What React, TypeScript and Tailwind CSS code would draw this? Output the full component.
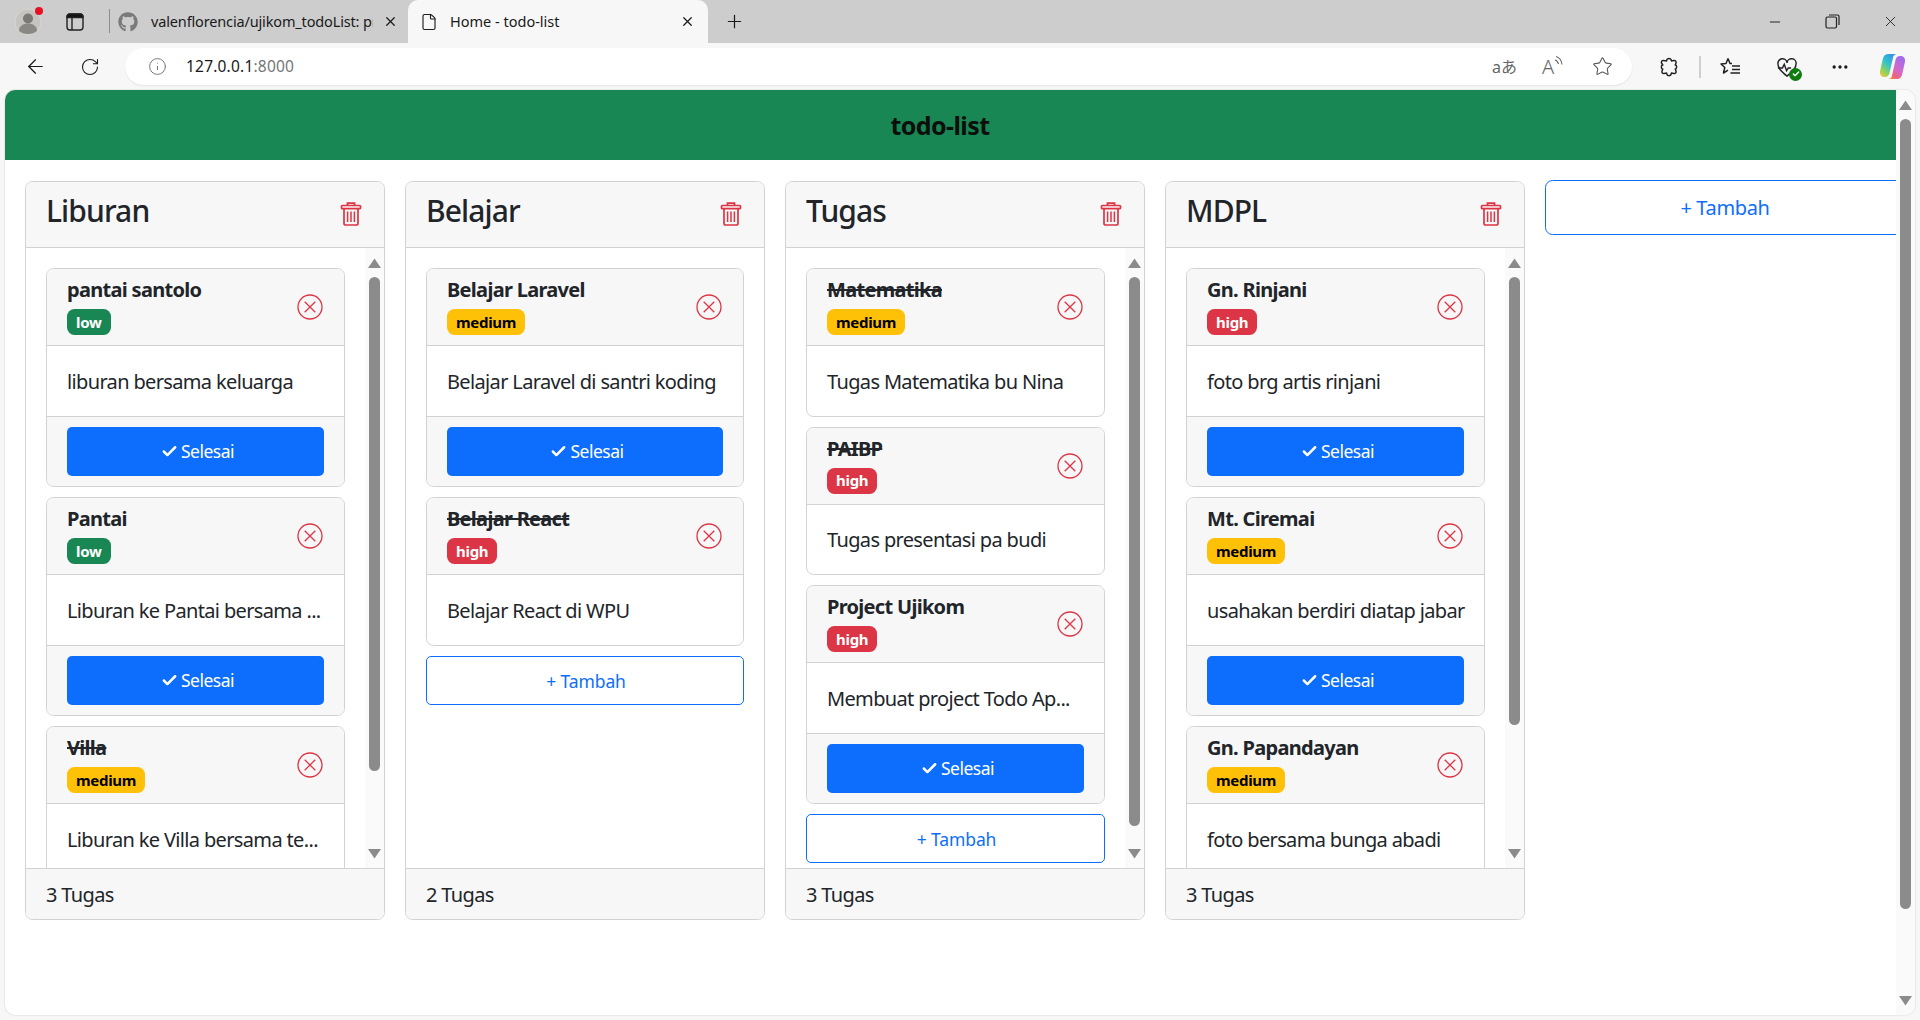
import { ArrowLeft, Check, File, Info, Minus, MoreHorizontal, Plus, RotateCw, Star, X } from "lucide-react";
import { FaGithub } from "react-icons/fa";

type Level = "low" | "medium" | "high";
type Task = { title: string; level: Level; text: string; done?: boolean };
type Board = { name: string; count: string; tasks: Task[]; thumb?: string; add?: boolean };

const boards: Board[] = [
  {
    name: "Liburan",
    count: "3 Tugas",
    thumb: "h-[494px]",
    tasks: [
      { title: "pantai santolo", level: "low", text: "liburan bersama keluarga" },
      { title: "Pantai", level: "low", text: "Liburan ke Pantai bersama ..." },
      { title: "Villa", level: "medium", text: "Liburan ke Villa bersama te...", done: true },
    ],
  },
  {
    name: "Belajar",
    count: "2 Tugas",
    add: true,
    tasks: [
      { title: "Belajar Laravel", level: "medium", text: "Belajar Laravel di santri koding" },
      { title: "Belajar React", level: "high", text: "Belajar React di WPU", done: true },
    ],
  },
  {
    name: "Tugas",
    count: "3 Tugas",
    thumb: "h-[549px]",
    add: true,
    tasks: [
      { title: "Matematika", level: "medium", text: "Tugas Matematika bu Nina", done: true },
      { title: "PAIBP", level: "high", text: "Tugas presentasi pa budi", done: true },
      { title: "Project Ujikom", level: "high", text: "Membuat project Todo Ap..." },
    ],
  },
  {
    name: "MDPL",
    count: "3 Tugas",
    thumb: "h-[448px]",
    tasks: [
      { title: "Gn. Rinjani", level: "high", text: "foto brg artis rinjani" },
      { title: "Mt. Ciremai", level: "medium", text: "usahakan berdiri diatap jabar" },
      { title: "Gn. Papandayan", level: "medium", text: "foto bersama bunga abadi" },
    ],
  },
];

const badgeClass: Record<Level, string> = {
  low: "bg-[#198754] text-white",
  medium: "bg-[#ffc107] text-black",
  high: "bg-[#dc3545] text-white",
};

function TrashIcon() {
  return (
    <svg width="22" height="24" viewBox="0 0 22 24" fill="none" stroke="#dc3545" strokeWidth="1.7" className="mb-[2px]">
      <rect x="1.5" y="3.5" width="19" height="3.2" rx="0.8" />
      <path d="M7.500 3V1.200h7V3" strokeWidth="1.8" />
      <path d="M4 7v14.200c0 1 .8 1.800 1.800 1.800h10.400c1 0 1.800-.8 1.800-1.800V7" />
      <path d="M7.600 9.500v10.500M11 9.500v10.500M14.400 9.500v10.500" strokeWidth="1.500" />
    </svg>
  );
}

function CloseCircle() {
  return (
    <svg width="26" height="26" viewBox="0 0 26 26" fill="none" stroke="#dc3545" strokeWidth="1.3" className="shrink-0">
      <circle cx="13" cy="13" r="12" />
      <path d="M7.700 7.700l10.600 10.600M18.300 7.700L7.700 18.300" />
    </svg>
  );
}

function Scrollbar({ thumb }: { thumb: string }) {
  return (
    <div className="flex flex-col items-center bg-[#fafafa] shrink-0 w-[19px] pt-[10px] pb-[9px]">
      <svg width="13" height="10" viewBox="0 0 13 10" className="shrink-0"><path d="M6.500 0.500L13 10H0z" fill="#8b8b8b" /></svg>
      <div className={`w-[11px] mt-[9px] rounded-full bg-[#8b8b8b] shrink-0 ${thumb}`} />
      <div className="flex-1" />
      <svg width="13" height="10" viewBox="0 0 13 10" className="shrink-0"><path d="M6.500 9.500L13 0H0z" fill="#8b8b8b" /></svg>
    </div>
  );
}

function TaskCard({ task }: { task: Task }) {
  return (
    <div className="border border-[#d2d2d2] rounded-[7.5px] overflow-hidden shrink-0">
      <div className="h-[77px] bg-[#f7f7f7] border-b border-[#d2d2d2] pl-5 pr-[21px] flex items-center justify-between">
        <div className="self-start pt-[9px]">
          <div className={`text-[20px] leading-[24px] mb-[7px] font-bold tracking-[-0.7px] text-[#212529] ${task.done ? "line-through" : ""}`}>{task.title}</div>
          <span className={`flex w-fit items-center h-[26px] px-[9px] rounded-[7.5px] text-[15px] font-bold tracking-[-0.3px] ${badgeClass[task.level]}`}>{task.level}</span>
        </div>
        <CloseCircle />
      </div>
      <div className={`${task.done ? "h-[69.5px]" : "h-[70px]"} px-5 pt-[2px] flex items-center text-[20px] tracking-[-0.65px] text-[#212529] whitespace-nowrap`}>{task.text}</div>
      {!task.done && (
        <div className="h-[70px] bg-[#f7f7f7] border-t border-[#d2d2d2] px-5 flex items-center">
          <button className="w-full h-[49px] pl-[4px] bg-[#0d6efd] text-white rounded-[5px] flex items-center justify-center gap-[3px] text-[17.5px] tracking-[-0.5px]">
            <Check size={17} strokeWidth={3.5} />
            Selesai
          </button>
        </div>
      )}
    </div>
  );
}

function Column({ board }: { board: Board }) {
  return (
    <div className="w-[360px] h-[739px] shrink-0 border border-[#d2d2d2] rounded-[7.5px] flex flex-col overflow-hidden">
      <div className="h-[66px] shrink-0 bg-[#f7f7f7] border-b border-[#d2d2d2] pl-5 pr-[22px] flex items-center justify-between">
        <h4 className="text-[30px] font-medium pb-[9px] tracking-[-0.9px] text-[#212529]">{board.name}</h4>
        <TrashIcon />
      </div>
      <div className="flex-1 flex min-h-0">
        <div className={`flex-1 min-w-0 flex flex-col gap-[10px] pt-5 pl-5 overflow-hidden ${board.thumb ? "pr-0" : "pr-5"}`}>
          {board.tasks.map((t) => (
            <TaskCard key={t.title} task={t} />
          ))}
          {board.add && (
            <button className="h-[49px] shrink-0 pt-[2px] pl-[2px] border border-[#0d6efd] rounded-[5px] text-[#0d6efd] text-[17.5px] tracking-[-0.1px]">+ Tambah</button>
          )}
        </div>
        {board.thumb && <div className="w-[20px] shrink-0 bg-white" />}
        {board.thumb && <Scrollbar thumb={board.thumb} />}
      </div>
      <div className="h-[51px] shrink-0 pt-[2px] bg-[#f7f7f7] border-t border-[#d2d2d2] px-5 flex items-center text-[20px] tracking-[-0.65px] text-[#212529]">{board.count}</div>
    </div>
  );
}

function BrowserChrome() {
  return (
    <>
      <div className="h-[43px] bg-[#cdcdcd] flex items-end text-[#1a1a1a] text-[14.5px] shrink-0">
        <div className="relative w-[56px] h-full flex items-center justify-center">
          <svg width="28" height="28" viewBox="0 0 28 28">
            <circle cx="14" cy="14" r="13" fill="#c6c4c1" stroke="#d8d6d3" />
            <circle cx="14" cy="10.500" r="5" fill="#7b7976" />
            <path d="M5 23c0-5 4-7.500 9-7.500s9 2.500 9 7.500c-2 2-5.500 3-9 3s-7-1-9-3z" fill="#8a8885" />
          </svg>
          <span className="absolute top-[7px] right-[13px] w-[8px] h-[8px] rounded-full bg-[#e81123]" />
        </div>
        <div className="w-[38px] h-full flex items-center justify-center">
          <svg width="18" height="18" viewBox="0 0 18 18" fill="none" stroke="#222" strokeWidth="1.400">
            <rect x="1" y="1" width="16" height="16" rx="3" />
            <path d="M1 4.500a3 3 0 0 1 3-3.500h10a3 3 0 0 1 3 3.500z" fill="#111" />
            <path d="M6 5v12" />
          </svg>
        </div>
        <div className="w-[1px] h-[24px] bg-[#8d8d8d] ml-[15px] mb-[10px]" />
        <div className="w-[298px] h-full flex items-center pl-[8px] pr-[12px] gap-[13px]">
          <FaGithub size={20} className="text-[#7a7a7a] shrink-0" />
          <span className="w-[222px] shrink-0 overflow-hidden whitespace-nowrap tracking-[-0.15px]">valenflorencia/ujikom_todoList: pr</span>
          <X size={15} className="shrink-0 -ml-[3px]" />
        </div>
        <div className="w-[300px] h-[43px] bg-[#f7f7f7] rounded-t-[10px] flex items-center pl-[12px] pr-[13px] gap-[12px]">
          <File size={18} strokeWidth={1.500} />
          <span className="flex-1">Home - todo-list</span>
          <X size={15} />
        </div>
        <div className="w-[52px] h-full flex items-center justify-center"><Plus size={21} strokeWidth={1.400} /></div>
        <div className="flex-1" />
        <div className="h-full flex items-center gap-[42px] pr-[21px]">
          <Minus size={16} strokeWidth={1.400} />
          <svg width="15" height="15" viewBox="0 0 15 15" fill="none" stroke="#222" strokeWidth="1.200"><rect x="1" y="3" width="10.500" height="11" rx="1.500" /><path d="M4 1h8.500A1.500 1.500 0 0 1 14 2.500V11" /></svg>
          <X size={17} strokeWidth={1.200} />
        </div>
      </div>
      <div className="h-[47px] bg-[#f7f7f7] flex items-center shrink-0 text-[#1a1a1a]">
        <div className="w-[125px] flex items-center pl-[24px] gap-[33px]">
          <ArrowLeft size={23} strokeWidth={1.300} />
          <RotateCw size={20} strokeWidth={1.300} />
        </div>
        <div className="w-[1507px] h-[37px] rounded-full bg-white flex items-center pl-[23px] pr-[19px] text-[15.5px] tracking-[0.2px] shadow-[0_1px_2px_rgba(0,0,0,0.08)]">
          <Info size={19} strokeWidth={1.100} className="text-[#666] mr-[19px]" />
          <span>127.0.0.1</span>
          <span className="text-[#767676]">:8000</span>
          <div className="flex-1" />
          <span className="text-[#666] text-[16px] tracking-normal w-[50px] font-['Noto_Sans','Noto_Sans_CJK_JP',sans-serif]">aあ</span>
          <div className="w-[50px] flex items-start text-[#666]">
            <span className="text-[20px] leading-[24px] font-light">A</span>
            <svg width="10" height="14" viewBox="0 0 10 14" fill="none" stroke="#666" strokeWidth="1.100"><path d="M1 5c2 .5 3 2 3.500 4M2 1.500c3.500 1 5.500 3.500 6 8" /></svg>
          </div>
          <Star size={21} strokeWidth={1.200} className="text-[#555]" />
        </div>
        <div className="flex-1 flex items-center">
          <svg width="20" height="20" viewBox="0 0 20 20" fill="none" stroke="#222" strokeWidth="1.500" className="ml-[27px] shrink-0">
            <path d="M8 2.500c.5-1.500 3.500-1.500 4 0l.500 1.500 2.500-.5c1.500-.2 2.500 1 2 2.500l-.7 1.800c1.800.7 1.800 3.700 0 4.400l.7 1.800c.5 1.500-.5 2.700-2 2.500l-2.500-.5-.5 1.500c-.5 1.500-3.500 1.500-4 0l-.5-1.500-2.500.5c-1.500.2-2.500-1-2-2.500l.7-1.800c-1.800-.7-1.800-3.700 0-4.400L2.500 6c-.5-1.500.5-2.700 2-2.500l3 .5z" />
          </svg>
          <div className="w-[2px] h-[22px] bg-[#cfcfcf] ml-[20px] shrink-0" />
          <svg width="21" height="20" viewBox="0 0 21 20" fill="none" stroke="#222" strokeWidth="1.500" className="ml-[19px] shrink-0">
            <path d="M8 1.500l2 5h2M8 1.500L6 6.500 1 7l3.800 3.500L3.500 16 8 13.200" strokeLinejoin="round" />
            <path d="M12 9h8M12 12.500h8M10.500 16h9.500" />
          </svg>
          <div className="relative ml-[35px] shrink-0 w-[20px] h-[20px]">
            <svg width="22" height="20" viewBox="0 0 24 22" fill="none" stroke="#222" strokeWidth="1.600"><path d="M12 21C5 15 2 12 2 7.500a5 5 0 0 1 10-1 5 5 0 0 1 10 1c0 4.500-3 7.500-10 13.500z" /><path d="M2 12h5l2-4 2.500 7 2-3h3" /></svg>
            <span className="absolute -right-[6px] -bottom-[4px] w-[13px] h-[13px] rounded-full bg-[#107c10] flex items-center justify-center text-white">
              <Check size={8} strokeWidth={4} />
            </span>
          </div>
          <MoreHorizontal size={20} className="ml-[34px] shrink-0" />
          <svg width="27" height="27" viewBox="0 0 27 27" className="ml-[29px] shrink-0">
            <defs>
              <linearGradient id="cpA" x1="0.800" y1="0" x2="0.100" y2="1"><stop offset="0" stopColor="#2f8fe8" /><stop offset="0.45" stopColor="#35c4c9" /><stop offset="0.75" stopColor="#8ed25c" /><stop offset="1" stopColor="#f2c53d" /></linearGradient>
              <linearGradient id="cpB" x1="0.800" y1="0" x2="0.200" y2="1"><stop offset="0" stopColor="#9a6cf0" /><stop offset="0.55" stopColor="#d667c9" /><stop offset="0.85" stopColor="#f0647a" /><stop offset="1" stopColor="#f58a45" /></linearGradient>
            </defs>
            <path d="M9 1h9c-2.500 0-3.500 1.500-4 3.500L10.500 20c-.6 2.500-2 4-4.500 4-3.500 0-5.500-2-5-5.500L3.500 7C4.300 3 6 1 9 1z" fill="url(#cpA)" />
            <path d="M18 26H9c2.500 0 3.500-1.500 4-3.500L16.500 7c.6-2.500 2-4 4.500-4 3.500 0 5.500 2 5 5.500L23.500 20c-.8 4-2.500 6-5.500 6z" fill="url(#cpB)" />
          </svg>
        </div>
      </div>
    </>
  );
}

export default function App() {
  return (
    <div className="h-screen flex flex-col overflow-hidden bg-[#f7f7f7] font-['Noto_Sans',sans-serif]">
      <BrowserChrome />
      <div className="flex-1 min-h-0 mx-[5px] mb-[5px] bg-white rounded-[10px] overflow-hidden flex shadow-[0_0_2px_rgba(0,0,0,0.2)]">
        <div className="flex-1 min-w-0 flex flex-col">
          <div className="h-[70px] shrink-0 bg-[#198754] pr-[21px] pt-[2px] flex items-center justify-center text-[25px] font-bold tracking-[-0.6px] text-[#0b0f0c]">todo-list</div>
          <div className="flex-1 flex gap-5 pl-5 pt-[20px] overflow-hidden items-start">
            {boards.map((b) => (
              <div key={b.name} className="pt-px shrink-0">
                <Column board={b} />
              </div>
            ))}
            <button className="w-[360px] h-[55px] shrink-0 border border-[#0d6efd] rounded-[7.5px] text-[#0d6efd] text-[20px] tracking-[-0.35px]">+ Tambah</button>
          </div>
        </div>
        <Scrollbar thumb="h-[790px]" />
      </div>
    </div>
  );
}
